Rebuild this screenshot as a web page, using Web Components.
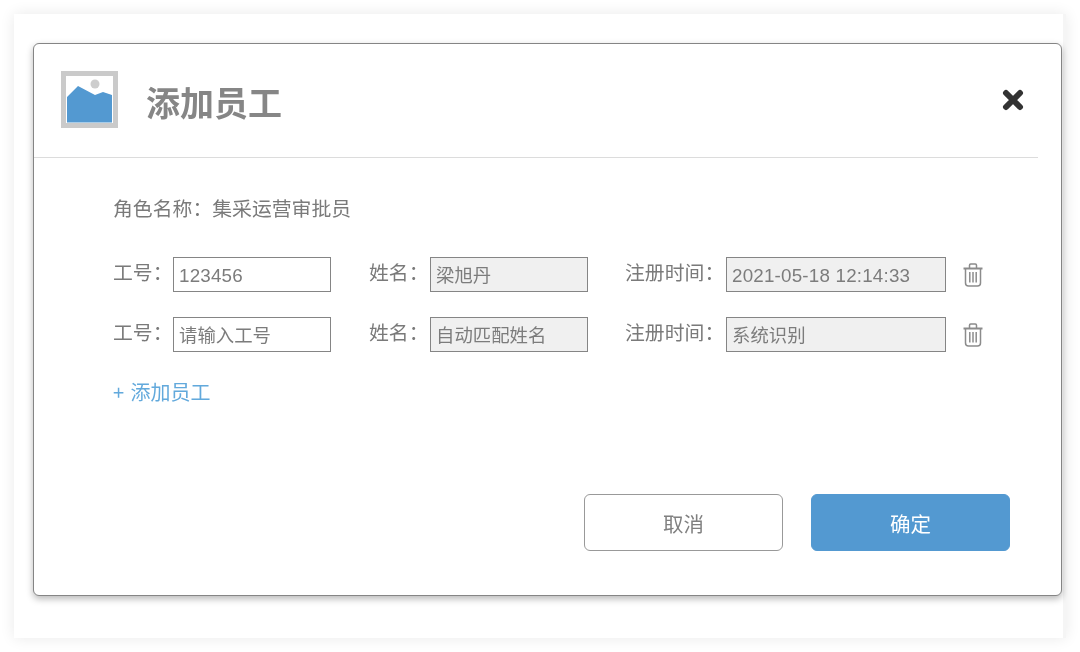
<!DOCTYPE html>
<html lang="zh">
<head>
<meta charset="utf-8">
<title>添加员工</title>
<style>
  html, body { margin: 0; height: 100%; background: #fff; }
  body { font-family: "Noto Sans CJK SC", "Noto Sans", sans-serif; overflow: hidden; }
</style>
</head>
<body>

<staff-sheet>
  <staff-dialog>
    <staff-header slot="header">添加员工</staff-header>

    <role-line>角色名称：集采运营审批员</role-line>

    <staff-row>
      <staff-field label="工号：" width="158" lw="60" num>123456</staff-field>
      <staff-field label="姓名：" width="158" lw="61" readonly>梁旭丹</staff-field>
      <staff-field label="注册时间：" width="220" lw="100" readonly num>2021-05-18 12:14:33</staff-field>
    </staff-row>
    <staff-row>
      <staff-field label="工号：" width="158" lw="60">请输入工号</staff-field>
      <staff-field label="姓名：" width="158" lw="61" readonly>自动匹配姓名</staff-field>
      <staff-field label="注册时间：" width="220" lw="100" readonly>系统识别</staff-field>
    </staff-row>

    <add-link>+ 添加员工</add-link>

    <staff-button slot="footer">取消</staff-button>
    <staff-button slot="footer" primary>确定</staff-button>
  </staff-dialog>
</staff-sheet>

<script>
  // small helper, every element just sets its shadow markup once
  class Base extends HTMLElement {
    constructor() {
      super();
      this.attachShadow({ mode: "open" });
    }
    render(html) {
      this.shadowRoot.innerHTML = html;
    }
  }

  class StaffSheet extends Base {
    connectedCallback() {
      this.render(`
        <style>
          :host {
            display: block;
            box-sizing: border-box;
            width: 1052px;
            height: 624px;
            margin: 14px 0 0 14px;
            padding: 29px 0 0 19px;
            background: #fff;
            border-right: 3px solid #f5f5f5;
            box-shadow: 0 0 14px rgba(0, 0, 0, .09);
            filter: blur(.45px);
          }
        </style>
        <slot></slot>
      `);
    }
  }

  class StaffDialog extends Base {
    connectedCallback() {
      this.render(`
        <style>
          :host {
            display: block;
            box-sizing: border-box;
            width: 1029px;
            height: 553px;
            background: #fff;
            border: 1px solid #858585;
            border-radius: 6px;
            box-shadow: 0 3px 7px rgba(0, 0, 0, .28);
          }
          .body { padding: 35px 0 0 79px; }
          .footer {
            display: flex;
            gap: 28px;
            padding-left: 550px;
            margin-top: 87px;
          }
        </style>
        <slot name="header"></slot>
        <div class="body"><slot></slot></div>
        <div class="footer"><slot name="footer"></slot></div>
      `);
    }
  }

  class StaffHeader extends Base {
    connectedCallback() {
      this.render(`
        <style>
          :host {
            display: flex;
            align-items: center;
            box-sizing: border-box;
            width: 1004px;
            height: 114px;
            padding: 0 14px 0 27px;
            border-bottom: 1px solid #dcdcdc;
          }
          .pic { flex: none; display: block; margin-top: -2px; }
          .title {
            flex: 1;
            margin: 2px 0 0 28px;
            font-size: 34px;
            line-height: 50px;
            font-weight: 700;
            color: #868686;
          }
          .close { flex: none; display: block; margin-top: -2px; }
        </style>
        <svg class="pic" width="57" height="57" viewBox="0 0 57 57">
          <rect x="2.500" y="2.500" width="52" height="52" fill="#fff" stroke="#cacaca" stroke-width="5"/>
          <circle cx="34" cy="13" r="4.500" fill="#cdcdcd"/>
          <path d="M6 26 L17 15 L34 24 L42 21 L51 24 L51 51.500 L6 51.500 Z" fill="#5399d1"/>
        </svg>
        <div class="title"><slot></slot></div>
        <svg class="close" width="22" height="22" viewBox="0 0 22 22">
          <path d="M4 4 L18 18 M18 4 L4 18" stroke="#333" stroke-width="6" stroke-linecap="round"/>
        </svg>
      `);
    }
  }

  class RoleLine extends Base {
    connectedCallback() {
      this.render(`
        <style>
          :host {
            display: block;
            font-size: 19.850px;
            line-height: 30px;
            color: #7a7a7a;
            margin-bottom: 34px;
          }
        </style>
        <slot></slot>
      `);
    }
  }

  class StaffRow extends Base {
    connectedCallback() {
      this.render(`
        <style>
          :host {
            display: flex;
            align-items: center;
            gap: 38px;
            height: 35px;
            margin-bottom: 25px;
          }
          svg { display: block; margin-left: -21px; }
        </style>
        <slot></slot>
        <svg width="20" height="24" viewBox="0 0 20 24" fill="none" stroke="#8c8c8c" stroke-width="1.500">
          <path d="M.500 5.500 H19.500" stroke-width="2"/>
          <path d="M6.500 5 V2.200 Q6.500 1 7.700 1 H12.300 Q13.500 1 13.500 2.200 V5"/>
          <path d="M2.500 6 V20 Q2.500 23 5.500 23 H14.500 Q17.500 23 17.500 20 V6"/>
          <path d="M6.800 9 V19.500 M10 9 V19.500 M13.200 9 V19.500"/>
        </svg>
      `);
    }
  }

  class StaffField extends Base {
    connectedCallback() {
      let w = this.getAttribute("width");
      let lw = this.getAttribute("lw");
      let bg = this.hasAttribute("readonly") ? "#f0f0f0" : "#fff";
      // digits in the reference are in an Arial-like face
      let num = this.hasAttribute("num")
        ? `font-family: "Liberation Sans", sans-serif; font-size: 18.8px; letter-spacing: .2px; line-height: 35px;`
        : "";
      this.render(`
        <style>
          :host { display: flex; align-items: center; }
          .label {
            width: ${lw}px;
            font-size: 19.850px;
            line-height: 30px;
            color: #7a7a7a;
            white-space: nowrap;
            margin-top: -5px;
            ${lw == 100 ? "text-indent: -1px;" : ""}
          }
          .box {
            box-sizing: border-box;
            width: ${w}px;
            height: 35px;
            padding: 0 5px;
            border: 1px solid #858585;
            background: ${bg};
            font-size: 18.400px;
            line-height: 32px;
            color: #7c7c7c;
            white-space: nowrap;
            overflow: hidden;
            ${num}
          }
        </style>
        <div class="label">${this.getAttribute("label")}</div>
        <div class="box"><slot></slot></div>
      `);
    }
  }

  class AddLink extends Base {
    connectedCallback() {
      this.render(`
        <style>
          :host {
            display: block;
            font-size: 20px;
            line-height: 30px;
            color: #62a9dc;
            margin-top: 12px;
            word-spacing: 2px;
          }
        </style>
        <slot></slot>
      `);
    }
  }

  class StaffButton extends Base {
    connectedCallback() {
      let primary = this.hasAttribute("primary");
      this.render(`
        <style>
          :host {
            display: flex;
            align-items: center;
            justify-content: center;
            box-sizing: border-box;
            width: 199px;
            height: 57px;
            border-radius: 6px;
            border: 1px solid ${primary ? "#5399d1" : "#999"};
            background: ${primary ? "#5399d1" : "#fff"};
            color: ${primary ? "#fff" : "#808080"};
            font-size: 20.500px;
          }
        </style>
        <slot></slot>
      `);
    }
  }

  customElements.define("staff-sheet", StaffSheet);
  customElements.define("staff-dialog", StaffDialog);
  customElements.define("staff-header", StaffHeader);
  customElements.define("role-line", RoleLine);
  customElements.define("staff-row", StaffRow);
  customElements.define("staff-field", StaffField);
  customElements.define("add-link", AddLink);
  customElements.define("staff-button", StaffButton);
</script>
</body>
</html>
